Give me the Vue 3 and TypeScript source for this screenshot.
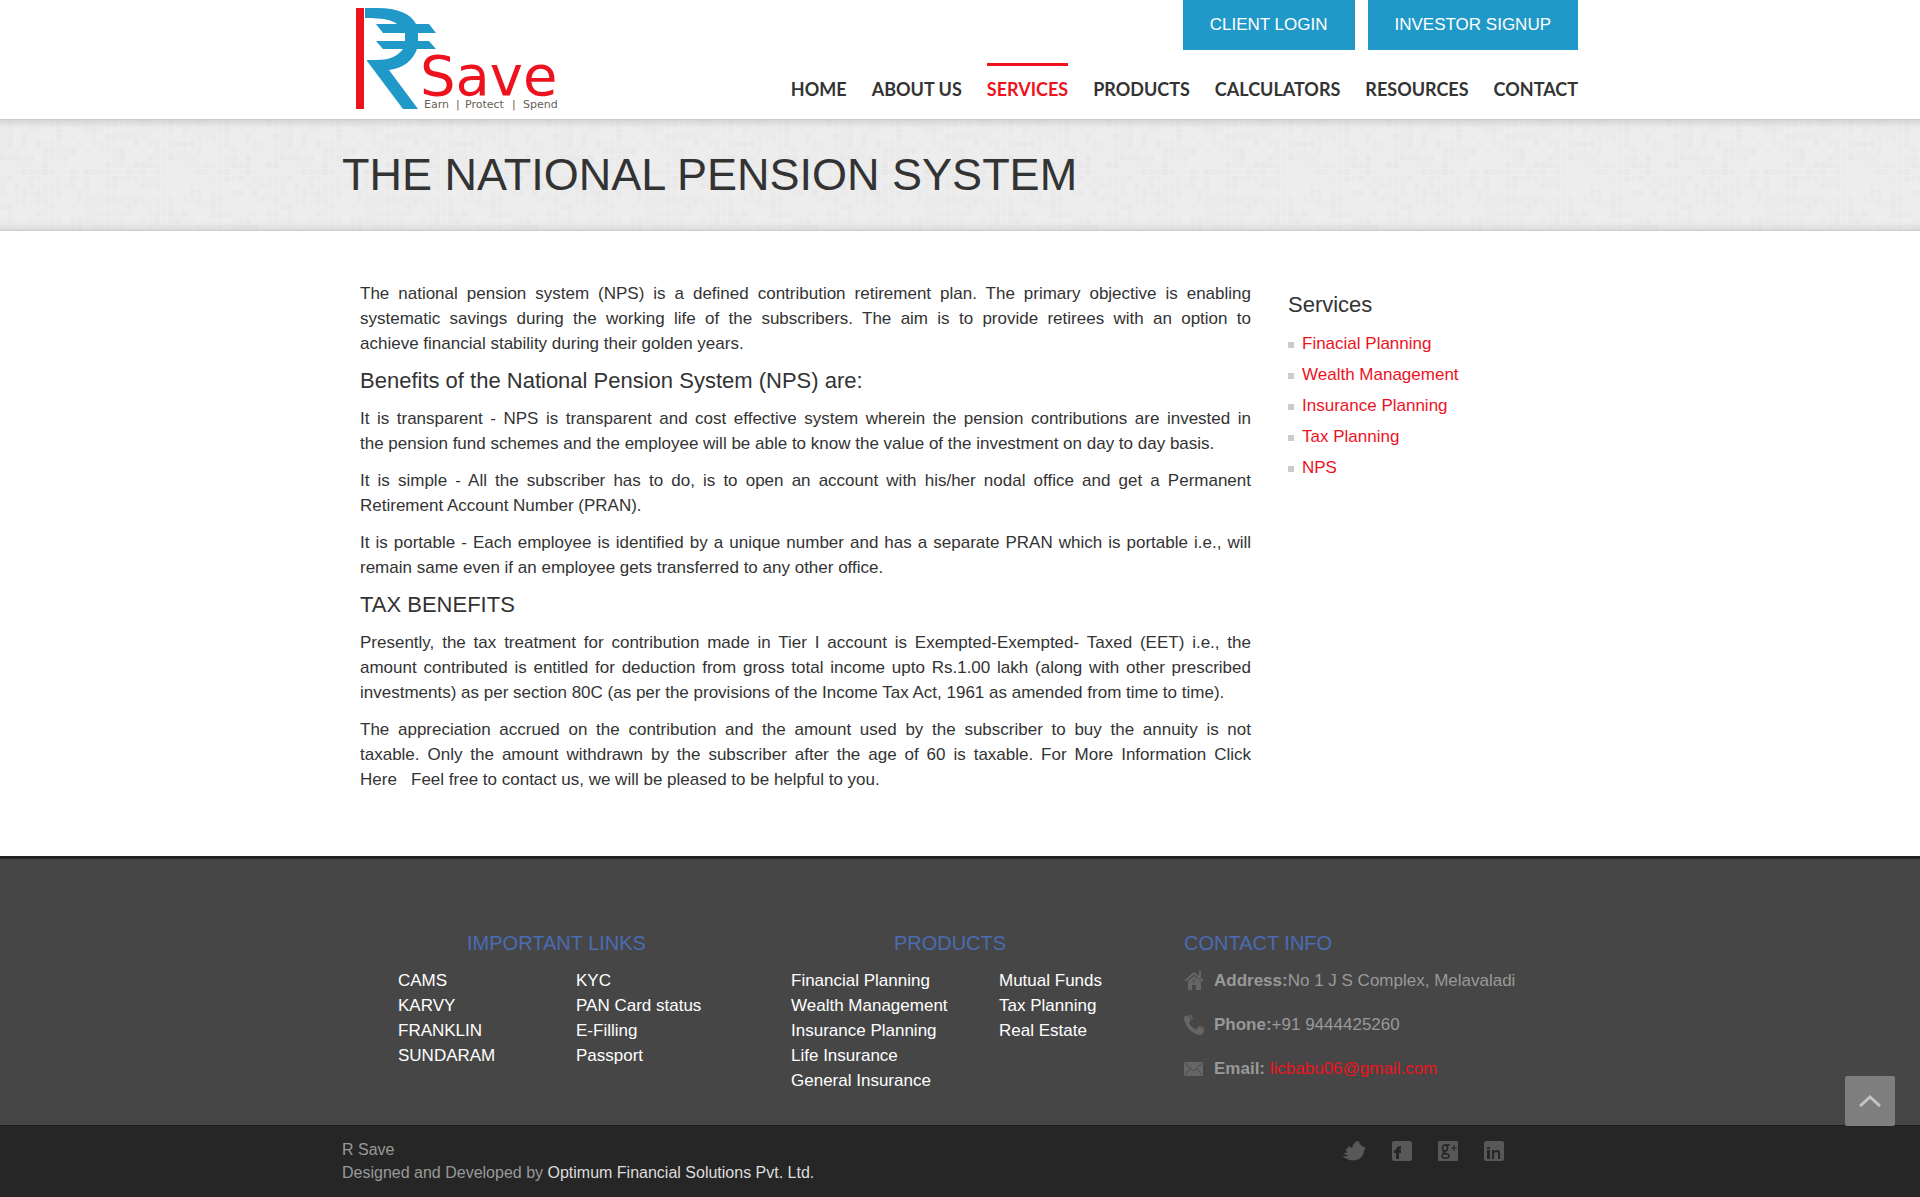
<script setup lang="ts">
interface Cell {
  x: number
  y: number
  shade: number
}

const navItems: string[] = ['Home', 'About Us', 'Services', 'Products', 'Calculators', 'Resources', 'Contact']
const services: string[] = ['Finacial Planning', 'Wealth Management', 'Insurance Planning', 'Tax Planning', 'NPS']
const importantLinks: string[][] = [
  ['CAMS', 'KARVY', 'FRANKLIN', 'SUNDARAM'],
  ['KYC', 'PAN Card status', 'E-Filling', 'Passport'],
]
const productLinks: string[][] = [
  ['Financial Planning', 'Wealth Management', 'Insurance Planning', 'Life Insurance', 'General Insurance'],
  ['Mutual Funds', 'Tax Planning', 'Real Estate'],
]

// Repeatable mosaic of faint squares behind the page title
const cells: Cell[] = []
let seed = 7
for (let row = 0; row < 16; row++) {
  for (let col = 0; col < 40; col++) {
    seed = (seed * 16807) % 2147483647
    cells.push({ x: col * 7, y: row * 7, shade: Math.pow(seed / 2147483647, 2) * 0.02 + 0.005 })
  }
}
</script>

<template>
  <header class="site-header">
    <div class="container header-row">
      <a href="#" class="logo" aria-label="R Save home">
        <svg width="220" height="119" viewBox="0 0 220 119">
          <rect x="14" y="8" width="8" height="101" fill="#ee121f" />
          <g fill="#2199c8">
            <path d="M23 8H35C56 8 69 14 74 24H87L94 33H76V41H87L94 49H75C71 60 62 68 47 70L76 109H61L25 61V60H33C47 60 55 57 61 49H41L34 41H63V33H41L34 24H55C50 20 41 18 23 18Z" />
          </g>
          <text x="78" y="95" class="logo-name">Save</text>
          <g class="logo-tag">
            <text x="82" y="108">Earn</text>
            <text x="114" y="108">|</text>
            <text x="123" y="108">Protect</text>
            <text x="170" y="108">|</text>
            <text x="181" y="108">Spend</text>
          </g>
        </svg>
      </a>
      <div class="header-right">
        <div class="account">
          <a href="#">CLIENT LOGIN</a>
          <a href="#">INVESTOR SIGNUP</a>
        </div>
        <nav class="nav">
          <a v-for="item in navItems" :key="item" href="#" :class="{ active: item === 'Services' }">{{ item }}</a>
        </nav>
      </div>
    </div>
  </header>

  <section class="title-band">
    <svg class="mosaic" aria-hidden="true">
      <defs>
        <pattern id="mosaic" width="280" height="112" patternUnits="userSpaceOnUse">
          <rect v-for="(c, i) in cells" :key="i" :x="c.x" :y="c.y" width="6" height="6" :fill-opacity="c.shade" />
        </pattern>
      </defs>
      <rect width="100%" height="100%" fill="url(#mosaic)" />
    </svg>
    <div class="container"><h1>THE NATIONAL PENSION SYSTEM</h1></div>
  </section>

  <main class="container content">
    <article>
      <p>The national pension system (NPS) is a defined contribution retirement plan. The primary objective is enabling systematic savings during the working life of the subscribers. The aim is to provide retirees with an option to achieve&nbsp;financial stability during their golden years.</p>
      <h2>Benefits of the National Pension System (NPS) are:</h2>
      <p>It is transparent - NPS is transparent and cost effective system wherein the pension contributions are invested in the&nbsp;pension fund schemes and the employee will be able to know the value of the investment on day to day basis.</p>
      <p>It is simple - All the subscriber has to do, is to open an account with his/her nodal office and get a Permanent Retirement Account Number (PRAN).</p>
      <p>It is portable - Each employee is identified by a unique number and has a separate PRAN which is portable i.e., will remain same even if an employee gets transferred to any other office.</p>
      <h2>TAX BENEFITS</h2>
      <p>Presently, the tax treatment for contribution made in Tier I account is Exempted-Exempted- Taxed (EET) i.e., the amount contributed is entitled for deduction from gross total income upto Rs.1.00 lakh (along with other prescribed investments) as per section 80C (as per the provisions of the Income Tax Act, 1961 as amended from time to time).</p>
      <p>The appreciation accrued on the contribution and the amount used by the subscriber to buy the annuity is not taxable.&nbsp;Only the amount withdrawn by the subscriber after the age of 60 is taxable. For More Information Click Here&nbsp;&nbsp;&nbsp;Feel&nbsp;free to contact us, we will be pleased to be helpful to you.</p>
    </article>
    <aside>
      <h2>Services</h2>
      <ul>
        <li v-for="s in services" :key="s"><a href="#">{{ s }}</a></li>
      </ul>
    </aside>
  </main>

  <footer>
    <div class="footer-main">
      <div class="container footer-grid">
        <section class="links">
          <h3>IMPORTANT LINKS</h3>
          <div class="link-lists">
            <ul v-for="(list, i) in importantLinks" :key="i">
              <li v-for="l in list" :key="l"><a href="#">{{ l }}</a></li>
            </ul>
          </div>
        </section>
        <section class="products">
          <h3>PRODUCTS</h3>
          <div class="link-lists">
            <ul v-for="(list, i) in productLinks" :key="i">
              <li v-for="l in list" :key="l"><a href="#">{{ l }}</a></li>
            </ul>
          </div>
        </section>
        <section class="contact">
          <h3>CONTACT INFO</h3>
          <ul>
            <li>
              <svg width="20" height="20" viewBox="0 0 20 20">
                <path d="M1 10 10 2 19 10M16 0V6" fill="none" stroke="#666" stroke-width="2" />
                <path fill="#666" d="M4 10 10 5 17 10V19H12V14H8V19H4Z" />
                <path stroke="#505050" d="M8 10H12M10 8V12" />
              </svg>
              <span><strong>Address:</strong>No 1 J S Complex, Melavaladi</span>
            </li>
            <li>
              <svg width="20" height="20" viewBox="0 0 20 20">
                <path fill="#666" d="M0 2 4 0 7 5 5 8Q7 12 12 15L14 12 20 14Q20 18 17 20 10 20 4 13 0 8 0 2ZM5 0 7 0 9 4 8 5ZM15 11 20 12V13L15 12Z" />
              </svg>
              <span><strong>Phone:</strong>+91 9444425260</span>
            </li>
            <li>
              <svg width="20" height="20" viewBox="0 0 20 20">
                <rect y="3" width="19" height="14" fill="#666" />
                <path d="M1 4 8 11Q9.500 12 11 11L18 4M1 16 6 10M18 16 13 10" fill="none" stroke="#464646" />
              </svg>
              <span><strong>Email:</strong> <a href="mailto:licbabu06@gmail.com">licbabu06@gmail.com</a></span>
            </li>
          </ul>
        </section>
      </div>
    </div>
    <div class="footer-bottom">
      <div class="container bottom-row">
        <p>R Save<br />Designed and Developed by <a href="#">Optimum Financial Solutions Pvt. Ltd.</a></p>
        <div class="social">
          <a href="#" aria-label="Twitter">
            <svg width="24" height="20" viewBox="0 0 24 20" fill="#585858">
              <path d="M0 15Q4 16 7 14 3 15 2 12L5 12Q4 10 4 7L6 8 6 5 10 7Q11 2 15 0L18 1 17 2 20 5 22 6 24 7 22 8 24 9 22 9Q22 15 17 18 9 22 0 15Z" />
            </svg>
          </a>
          <a href="#" aria-label="Facebook">
            <svg width="20" height="20" viewBox="0 0 20 20">
              <rect width="20" height="20" rx="2" fill="#585858" />
              <path d="M4 18V12H2V9H4Q4 5 9 5V8Q7 8 7 9H9V12H7V18Z" fill="#262626" />
            </svg>
          </a>
          <a href="#" aria-label="Google Plus">
            <svg width="20" height="20" viewBox="0 0 20 20">
              <rect width="20" height="20" rx="1" fill="#585858" />
              <g fill="none" stroke="#262626" stroke-width="1.600">
                <ellipse cx="7" cy="7" rx="2.500" ry="3" />
                <path d="M7 4H12M7 10Q4 11 6 12L9 13" />
                <ellipse cx="7.500" cy="15" rx="3.500" ry="2.200" />
                <path d="M13 7H19M16 4V10" stroke-width="1.200" />
              </g>
            </svg>
          </a>
          <a href="#" aria-label="LinkedIn">
            <svg width="20" height="20" viewBox="0 0 20 20">
              <rect width="20" height="20" rx="2" fill="#585858" />
              <path d="M3 9H6V18H3ZM3 6H6V8H3ZM8 9H10V10Q16 7 16 12V18H14V12Q13 10 10 12V18H8Z" fill="#262626" />
            </svg>
          </a>
        </div>
      </div>
    </div>
  </footer>

  <button type="button" class="to-top" aria-label="Back to top">
    <svg width="22" height="12" viewBox="0 0 22 12">
      <path d="M1 11 11 2 21 11" fill="none" stroke="#c4c4c4" stroke-width="3" />
    </svg>
  </button>
</template>

<style>
body {
  margin: 0;
  background: #fff;
  color: #333;
  font: 17px/25px "Liberation Sans", Arial, sans-serif;
}
</style>

<style scoped>
* {
  box-sizing: border-box;
}
h1, h2, h3, p, ul {
  margin: 0;
  padding: 0;
  font-weight: 400;
}
ul {
  list-style: none;
}
a {
  color: #ee121f;
  text-decoration: none;
}
svg {
  display: block;
}
.container {
  width: 100%;
  max-width: 1236px;
  margin: 0 auto;
}
.header-row {
  display: flex;
  justify-content: space-between;
}
.logo-name {
  font: 56px "DejaVu Sans", sans-serif;
  fill: #ee121f;
}
.logo-tag {
  font: 11px "DejaVu Sans", sans-serif;
  fill: #666055;
}
.account {
  display: flex;
  justify-content: flex-end;
  gap: 13px;
}
.account a {
  padding: 0 27px;
  background: #2199c8;
  color: #fff;
  line-height: 50px;
}
.nav {
  display: flex;
  justify-content: flex-end;
  gap: 25px;
  margin-top: 13px;
}
.nav a {
  padding-top: 10px;
  border-top: 3px solid transparent;
  color: #333;
  font: 700 18px/26px Lato, sans-serif;
  text-transform: uppercase;
}
.nav .active {
  border-color: #ee121f;
  color: #ee121f;
}
.title-band {
  position: relative;
  padding: 31px 0;
  border: solid #ccc;
  border-width: 1px 0;
  background: linear-gradient(#d8d8d8, #eee 8px, #eee 102px, #dedede);
}
.mosaic {
  position: absolute;
  inset: 0;
  width: 100%;
  height: 100%;
}
h1 {
  position: relative;
  font-size: 45px;
  line-height: 48px;
}
.content {
  display: flex;
  gap: 37px;
  padding: 50px 18px 64px;
}
article {
  flex: 0 1 891px;
  text-align: justify;
}
h2 {
  font-size: 22px;
  line-height: 26px;
}
article h2 {
  margin: 12px 0;
}
article p + p {
  margin-top: 12px;
}
aside {
  padding-top: 11px;
}
aside ul {
  margin-top: 10px;
}
aside li {
  display: flex;
  align-items: center;
  gap: 8px;
  line-height: 31px;
}
aside li::before {
  content: "";
  width: 6px;
  height: 6px;
  margin-top: 3px;
  background: #ccc;
}
.footer-main {
  padding: 71px 0 32px;
  border-top: 3px solid #222;
  background: #464646;
  color: #999;
}
.footer-grid {
  display: grid;
  grid-template-columns: 429px 358px 1fr;
}
h3 {
  margin-bottom: 12px;
  color: #4a6cb3;
  font-size: 20px;
  line-height: 26px;
}
.links h3, .products h3 {
  text-align: center;
}
.link-lists {
  display: grid;
}
.links .link-lists {
  grid-template-columns: 178px 1fr;
  padding-left: 56px;
}
.products .link-lists {
  grid-template-columns: 208px 1fr;
  padding-left: 20px;
}
.link-lists a {
  color: #fff;
}
.contact {
  padding-left: 55px;
}
.contact ul {
  display: grid;
  gap: 19px;
}
.contact li {
  display: flex;
  align-items: center;
  gap: 10px;
}
.footer-bottom {
  padding: 12px 0 13px;
  border-top: 1px solid #1e1e1e;
  background: #262626;
}
.bottom-row {
  display: flex;
  justify-content: space-between;
  color: #999;
  font-size: 16px;
  line-height: 23px;
}
.bottom-row p a {
  color: #ddd;
}
.social {
  display: flex;
  gap: 26px;
  padding: 3px 74px 0 0;
}
.to-top {
  position: fixed;
  right: 25px;
  bottom: 71px;
  display: grid;
  place-items: center;
  width: 50px;
  height: 50px;
  padding: 0;
  border: 0;
  border-radius: 2px;
  background: #7e7e7e;
}
</style>
